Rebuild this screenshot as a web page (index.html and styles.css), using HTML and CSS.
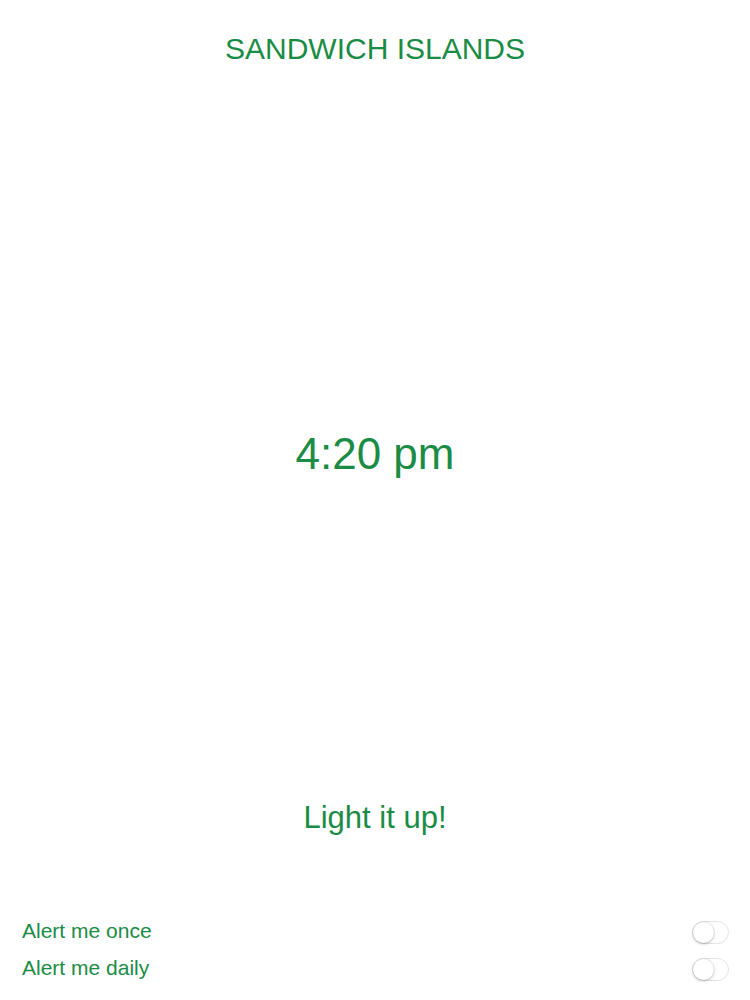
FILE: index.html
```html
<!DOCTYPE html>
<html>
<head>
<meta charset="utf-8">
<link rel="stylesheet" href="styles.css">
</head>
<body>
<div class="app">
  <header class="title">SANDWICH ISLANDS</header>
  <main class="clock">4:20 pm</main>
  <div class="action">Light it up!</div>
  <div class="alerts">
    <div class="row"><span class="label">Alert me once</span><span class="switch"><span class="knob"></span></span></div>
    <div class="row"><span class="label">Alert me daily</span><span class="switch"><span class="knob"></span></span></div>
  </div>
</div>
</body>
</html>
```

FILE: styles.css
```css
html, body {
  margin: 0;
  padding: 0;
  background: #ffffff;
}
body {
  font-family: "Liberation Sans", Arial, sans-serif;
  color: #1a8c45;
}
.app {
  width: 750px;
  height: 1000px;
  display: flex;
  flex-direction: column;
  align-items: stretch;
}
.title {
  text-align: center;
  font-size: 30px;
  line-height: 34px;
  margin-top: 32px;
}
.clock {
  text-align: center;
  font-size: 44px;
  line-height: 50px;
  margin-top: 363px;
}
.action {
  text-align: center;
  font-size: 31px;
  line-height: 36px;
  margin-top: 321px;
}
.alerts {
  margin-top: 83px;
  padding: 0 21px 0 22px;
  display: flex;
  flex-direction: column;
  gap: 13px;
}
.row {
  display: flex;
  justify-content: space-between;
  align-items: center;
  height: 24px;
}
.label {
  font-size: 21px;
}
.switch {
  width: 35px;
  height: 21px;
  border: 1px solid #e3e3e3;
  border-radius: 12px;
  background: #fff;
  position: relative;
  display: block;
  margin-top: 3px;
}
.knob {
  position: absolute;
  left: 0;
  top: 0;
  width: 21px;
  height: 21px;
  border-radius: 50%;
  background: #fff;
  box-shadow: 0 1px 3px rgba(0,0,0,0.25), 0 0 0 0.5px rgba(0,0,0,0.08);
}
```
